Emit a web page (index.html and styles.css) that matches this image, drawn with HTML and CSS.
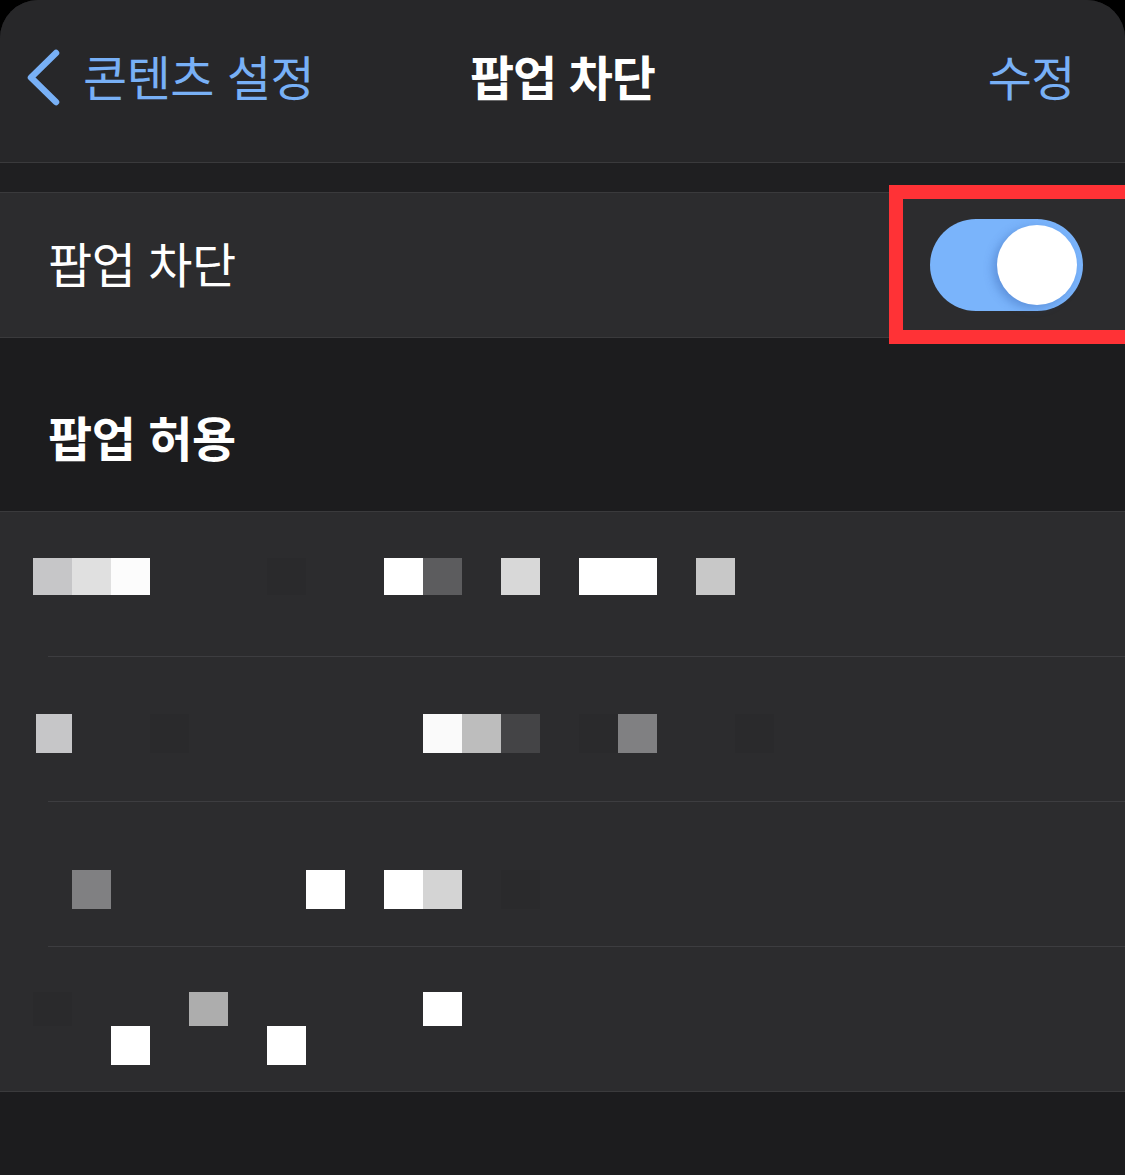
FILE: index.html
```html
<!DOCTYPE html>
<html lang="ko">
<head>
<meta charset="utf-8">
<link rel="stylesheet" href="styles.css">
</head>
<body>
<div class="screen">
  <header class="nav">
    <div class="nav-left">
      <svg class="chevron" width="40" height="60" viewBox="0 0 40 60"><path d="M31 5 L6 29.5 L31 54" fill="none" stroke="#78b0f6" stroke-width="6.5" stroke-linecap="round" stroke-linejoin="round"/></svg>
      <span class="back-text">콘텐츠 설정</span>
    </div>
    <div class="nav-title">팝업 차단</div>
    <div class="nav-right"><span class="edit">수정</span></div>
  </header>
  <div class="gap"></div>
  <section class="toggle-row">
    <span class="row-label">팝업 차단</span>
    <div class="switch"><div class="knob"></div></div>
    <div class="highlight"></div>
  </section>
  <div class="section-head">팝업 허용</div>
  <section class="list">
    <div class="item item-1">
      <div class="pix">
        <i class="c6"></i><i class="e0"></i><i class="fc"></i><i></i><i></i><i></i><i class="f2"></i><i></i><i></i><i class="ff"></i><i class="d5c"></i><i></i><i class="d8"></i><i></i><i class="ff"></i><i class="ff"></i><i></i><i class="c8"></i>
      </div>
    </div>
    <div class="item item-2">
      <div class="pix">
        <i class="c6 trim"></i><i></i><i></i><i class="f2"></i><i></i><i></i><i></i><i></i><i></i><i></i><i class="fa"></i><i class="bd"></i><i class="d44"></i><i></i><i class="f2"></i><i class="d80"></i><i></i><i></i><i class="f2"></i>
      </div>
    </div>
    <div class="item item-3">
      <div class="pix">
        <i></i><i class="d80"></i><i></i><i></i><i></i><i></i><i></i><i class="ff"></i><i></i><i class="ff"></i><i class="d4"></i><i></i><i class="f2"></i>
      </div>
    </div>
    <div class="item item-4">
      <div class="pix short">
        <i class="f2"></i><i></i><i></i><i></i><i class="ad"></i><i></i><i></i><i></i><i></i><i></i><i class="ff"></i>
      </div>
      <div class="pix">
        <i></i><i></i><i class="ff"></i><i></i><i></i><i></i><i class="ff"></i>
      </div>
    </div>
  </section>
</div>
</body>
</html>
```

FILE: styles.css
```css
html, body {
  margin: 0;
  padding: 0;
  background: #000;
}

body {
  width: 1125px;
  height: 1175px;
  overflow: hidden;
  font-family: "Noto Sans CJK KR", "Noto Sans", sans-serif;
}

.screen {
  height: 1175px;
  background: #1c1c1e;
  border-radius: 38px 38px 0 0;
  overflow: hidden;
}

.nav {
  height: 163px;
  background: #272729;
  border-bottom: 1px solid #3a3a3c;
  display: grid;
  grid-template-columns: 1fr auto 1fr;
  align-items: center;
  padding-bottom: 12px;
  box-sizing: border-box;
}

.nav-left {
  display: flex;
  align-items: center;
  padding-left: 25px;
  gap: 18px;
}

.chevron {
  display: block;
  margin-top: 6px;
}

.back-text,
.edit {
  color: #78b0f6;
  font-size: 48px;
  letter-spacing: -0.5px;
  line-height: 1;
}

.nav-title {
  color: #fff;
  font-size: 48px;
  font-weight: 700;
  letter-spacing: -1px;
  line-height: 1;
}

.nav-right {
  display: flex;
  justify-content: flex-end;
  padding-right: 50px;
}

.gap {
  height: 29px;
  background: #1f1f21;
}

.toggle-row {
  position: relative;
  height: 144px;
  background: #2c2c2e;
  border-top: 1px solid #3a3a3c;
  border-bottom: 1px solid #3a3a3c;
  display: flex;
  align-items: center;
  justify-content: space-between;
  padding: 0 42px 0 48px;
}

.row-label {
  color: #fff;
  font-size: 48px;
  letter-spacing: -0.5px;
  line-height: 1;
  margin-bottom: 6px;
}

.switch {
  width: 153px;
  height: 92px;
  border-radius: 46px;
  background: #7ab4fb;
  display: flex;
  justify-content: flex-end;
  align-items: center;
  padding: 0 6px;
  box-sizing: border-box;
}

.knob {
  width: 80px;
  height: 80px;
  border-radius: 50%;
  background: #fff;
  box-shadow: -4px 3px 10px rgba(40, 80, 160, 0.35);
}

.highlight {
  position: absolute;
  left: 889px;
  top: -8px;
  width: 250px;
  height: 159px;
  border: 14px solid #ff3236;
  box-sizing: border-box;
}

.section-head {
  height: 174px;
  box-sizing: border-box;
  padding: 74px 0 0 48px;
  color: #fff;
  font-size: 48px;
  font-weight: 700;
  letter-spacing: -0.5px;
  line-height: 1;
  border-bottom: 1px solid #3a3a3c;
}

.list {
  background: #2c2c2e;
  border-bottom: 1px solid #3a3a3c;
}

.item {
  height: 145px;
  box-sizing: border-box;
  padding-left: 33px;
  background: linear-gradient(#3d3d40, #3d3d40) no-repeat 48px 100% / calc(100% - 48px) 1px;
}

.item-4 {
  height: 144px;
  background: none;
}

.item-1 { padding-top: 46px; }
.item-2 { padding-top: 57px; }
.item-3 { padding-top: 68px; }
.item-4 { padding-top: 45px; }

.pix {
  display: flex;
  height: 39px;
}

.item-1 .pix { height: 37px; }

.pix.short { height: 34px; }

.pix i {
  display: block;
  width: 39px;
  flex: none;
}

.pix i.trim { margin-left: 3px; width: 36px; }

.c6 { background: #c6c6c8; }
.e0 { background: #e0e0e0; }
.fc { background: #fcfcfc; }
.ff { background: #ffffff; }
.fa { background: #fafafa; }
.f2 { background: #2a2a2c; }
.d5c { background: #5c5c5e; }
.d8 { background: #d8d8d8; }
.c8 { background: #c8c8c8; }
.bd { background: #bdbdbd; }
.d44 { background: #444446; }
.d80 { background: #808082; }
.d4 { background: #d4d4d4; }
.ad { background: #adadad; }
```
